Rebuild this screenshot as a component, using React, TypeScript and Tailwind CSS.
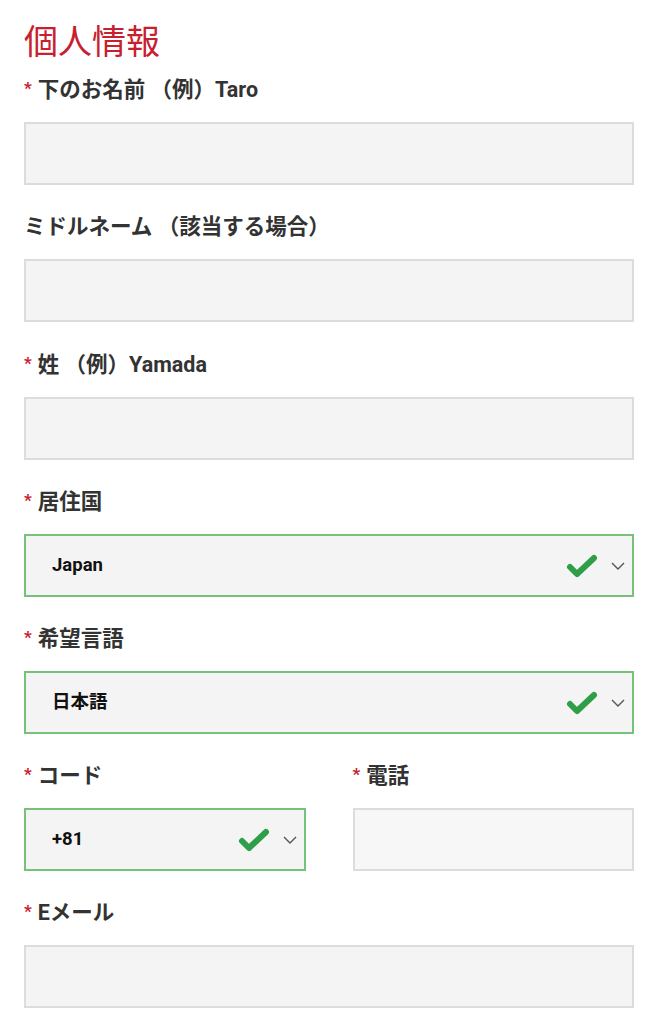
import React from "react";

const font = { fontFamily: '"Roboto", "Noto Sans CJK JP", sans-serif' };

function Label({ text, required = true }: { text: string; required?: boolean }) {
  return (
    <div className="flex items-center h-[28px] mb-[18px] text-[21.5px] font-bold text-[#333] leading-[28px]">
      {required && <span className="text-[#c8202f] text-[17px] mr-[6px] mt-[-4px]">*</span>}
      <span>{text}</span>
    </div>
  );
}

function TextBox() {
  return <div className="h-[63px] w-full bg-[#f4f4f4] border-2 border-[#dcdcdc]" />;
}

function Check() {
  return (
    <svg width="32" height="26" viewBox="0 0 32 26" className="shrink-0">
      <polyline points="4,14 11,21 28,5" fill="none" stroke="#2e9e48" strokeWidth="6" strokeLinecap="round" strokeLinejoin="round" />
    </svg>
  );
}

function Chevron() {
  return (
    <svg width="14" height="8" viewBox="0 0 14 8" className="shrink-0">
      <polyline points="1,1 7,7 13,1" fill="none" stroke="#555" strokeWidth="1.4" />
    </svg>
  );
}

function Select({ value }: { value: string }) {
  return (
    <div className="h-[63px] w-full bg-[#f4f4f4] border-2 border-[#76c27a] flex items-center pl-[26px] pr-[7px]">
      <span className="flex-1 text-[18.5px] font-bold text-[#111]">{value}</span>
      <Check />
      <span className="ml-[13px]">
        <Chevron />
      </span>
    </div>
  );
}

export default function App() {
  return (
    <div className="w-[657px] min-h-[1024px] bg-white pl-[24px] pr-[23px] pt-[20px]" style={font}>
      <h1 className="text-[34px] leading-[40px] text-[#c8202f] font-normal mb-[16px]" style={{ fontFamily: '"Noto Sans CJK JP", sans-serif' }}>
        個人情報
      </h1>
      <div className="mb-[28px]">
        <Label text="下のお名前 （例）Taro" />
        <TextBox />
      </div>
      <div className="mb-[29px]">
        <Label text="ミドルネーム （該当する場合）" required={false} />
        <TextBox />
      </div>
      <div className="mb-[28px]">
        <Label text="姓 （例）Yamada" />
        <TextBox />
      </div>
      <div className="mb-[28px]">
        <Label text="居住国" />
        <Select value="Japan" />
      </div>
      <div className="mb-[28px]">
        <Label text="希望言語" />
        <Select value="日本語" />
      </div>
      <div className="mb-[28px] grid grid-cols-2 gap-x-[47px]">
        <div>
          <Label text="コード" />
          <Select value="+81" />
        </div>
        <div>
          <Label text="電話" />
          <div className="h-[63px] w-full bg-[#f7f7f7] border-2 border-[#dcdcdc]" />
        </div>
      </div>
      <div className="mb-[28px]">
        <Label text="Eメール" />
        <TextBox />
      </div>
    </div>
  );
}
